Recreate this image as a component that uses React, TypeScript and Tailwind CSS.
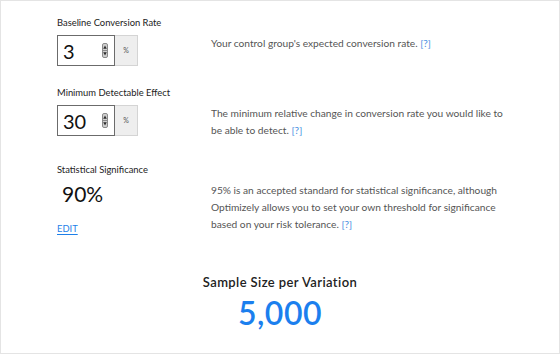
import React from 'react';

const font = { fontFamily: 'Lato, "Open Sans", sans-serif' };

const Spinner: React.FC = () => (
  <svg width="6" height="15" viewBox="0 0 6 15" className="shrink-0">
    <rect x="0.5" y="0.5" width="5" height="14" rx="1.5" fill="#cfcfcf" stroke="#8a8a8a" />
    <line x1="1" y1="7.5" x2="5" y2="7.5" stroke="#8a8a8a" />
    <path d="M3 2.5 L4.8 5.8 L1.2 5.8 Z" fill="#2b2b2b" />
    <path d="M1.2 9.2 L4.8 9.2 L3 12.5 Z" fill="#2b2b2b" />
  </svg>
);

interface NumberFieldProps {
  value: string;
}

const NumberField: React.FC<NumberFieldProps> = ({ value }) => (
  <div className="flex h-[31px]">
    <div className="w-[58px] h-full border border-[#6b6b6b] bg-white flex items-center pl-[5px] pr-[6px]">
      <span className="flex-1 text-[20px] leading-none text-[#111]">{value}</span>
      <Spinner />
    </div>
    <div className="w-[23px] h-full border border-l-0 border-[#d4d4d4] bg-[#eeeeee] flex items-center justify-center text-[7px] text-[#555]">
      %
    </div>
  </div>
);

const Help: React.FC = () => <span className="text-[#4a90e2]">[?]</span>;

interface RowProps {
  label: string;
  className?: string;
  left: React.ReactNode;
  children: React.ReactNode;
}

const Row: React.FC<RowProps> = ({ label, className, left, children }) => (
  <div className={`flex ${className ?? ''}`}>
    <div className="w-[154px] shrink-0">
      <div className="text-[9.4px] leading-[12px] text-[#222] mb-[6px]">{label}</div>
      {left}
    </div>
    <div className="pt-[18px] w-[296px] text-[10.2px] leading-[17px] text-[#555]">{children}</div>
  </div>
);

export default function App() {
  return (
    <div style={font} className="w-[560px] h-[354px] border border-[#e4e4e4] bg-white pl-[56px] pt-[16px] relative">
      <Row label="Baseline Conversion Rate" left={<NumberField value="3" />}>
        Your control group's expected conversion rate. <Help />
      </Row>

      <Row label="Minimum Detectable Effect" className="mt-[21px]" left={<NumberField value="30" />}>
        The minimum relative change in conversion rate you would like to be able to detect. <Help />
      </Row>

      <Row
        label="Statistical Significance"
        className="mt-[25px]"
        left={
          <div>
            <div className="pl-[5px] text-[21px] leading-[24px] text-[#111]">90%</div>
            <a className="block mt-[17px] text-[9.4px] leading-[12px] text-[#1d7fe8] underline underline-offset-2">
              EDIT
            </a>
          </div>
        }
      >
        95% is an accepted standard for statistical significance, although Optimizely allows you to set your own
        threshold for significance based on your risk tolerance. <Help />
      </Row>

      <div className="absolute left-0 right-0 top-[273px] flex flex-col items-center">
        <div className="text-[13px] tracking-[0.4px] leading-[16px] font-semibold text-[#222]">Sample Size per Variation</div>
        <div className="mt-[6px] text-[32px] tracking-[0.5px] leading-[34px] font-semibold text-[#1b7fee]">5,000</div>
      </div>
    </div>
  );
}
